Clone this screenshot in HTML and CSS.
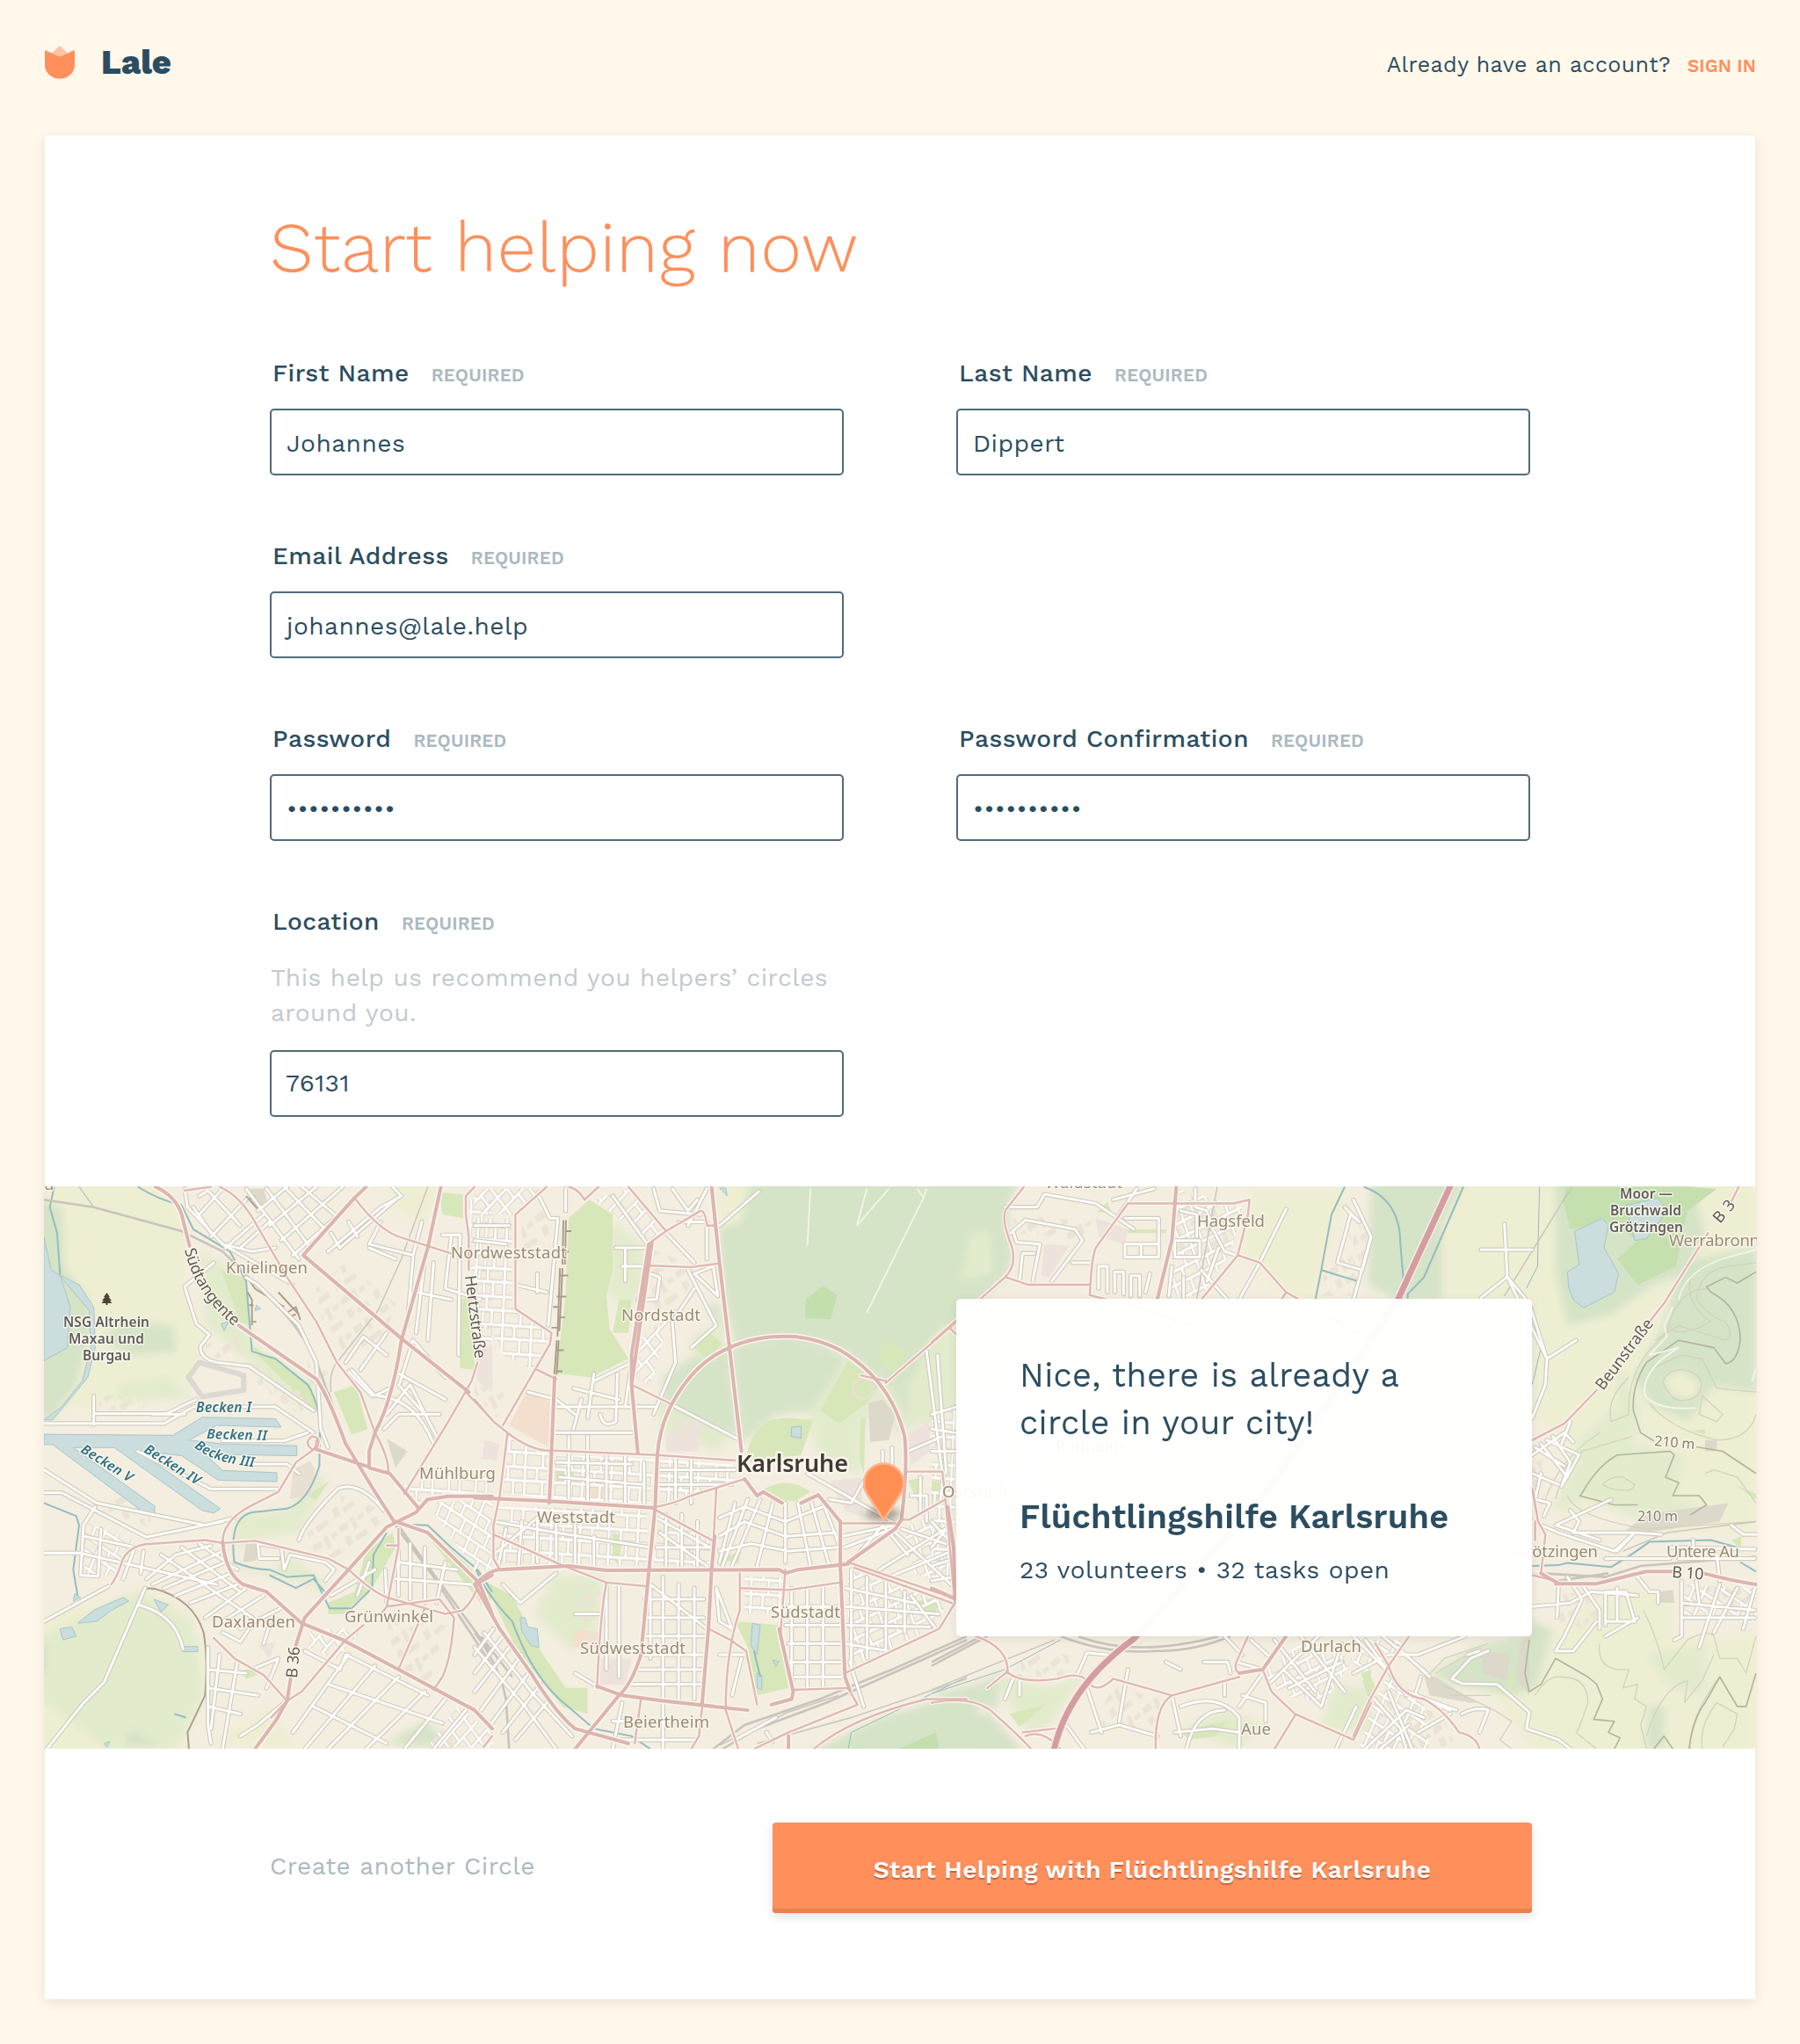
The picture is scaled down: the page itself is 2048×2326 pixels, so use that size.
FILE: index.html
```html
<!DOCTYPE html>
<html lang="en">
<head>
<meta charset="utf-8">
<title>Lale – Start helping now</title>
<link rel="stylesheet" href="styles.css">
</head>
<body>
<header class="topbar">
  <a class="brand">
    <svg class="brand-mark" viewBox="0 0 34 38" width="34" height="38">
      <path d="M0 5 17 12.500 34 5V22A17 15.500 0 0 1 0 22Z" fill="#ff8f5b"/>
      <path d="M17 0 26 8.500 17 12.500 8 8.500Z" fill="#ffc3a3"/>
    </svg>
    <span class="brand-name">Lale</span>
  </a>
  <div class="account"><span class="account-text">Already have an account?</span><a class="signin">SIGN IN</a></div>
</header>

<main class="card">
  <section class="form">
    <h1 class="title">Start helping now</h1>
    <div class="fields">
      <div class="field"><div class="label">First Name<span class="req">REQUIRED</span></div><div class="input">Johannes</div></div>
      <div class="field"><div class="label">Last Name<span class="req">REQUIRED</span></div><div class="input">Dippert</div></div>
      <div class="field wide"><div class="label">Email Address<span class="req">REQUIRED</span></div><div class="input">johannes@lale.help</div></div>
      <div class="field"><div class="label">Password<span class="req">REQUIRED</span></div><div class="input dots">••••••••••</div></div>
      <div class="field"><div class="label">Password Confirmation<span class="req">REQUIRED</span></div><div class="input dots">••••••••••</div></div>
      <div class="field"><div class="label">Location<span class="req">REQUIRED</span></div><p class="hint">This help us recommend you helpers’ circles around you.</p><div class="input zip">76131</div></div>
    </div>
  </section>

  <section class="map">
    <svg class="map-art" viewBox="50 1350 1949 640" width="1949" height="640">
      <defs>
        <pattern id="g0" width="92" height="76" patternUnits="userSpaceOnUse">
          <path class="pc" d="M0 14H92M0 50H92M18 0V76M56 14V50M74 50V90M74 -26V14"/><path class="pf" d="M0 14H92M0 50H92M18 0V76M56 14V50M74 50V90M74 -26V14"/>
        </pattern>
        <pattern id="g1" href="#g0" patternTransform="rotate(-42)"/>
        <pattern id="g2" href="#g0" patternTransform="rotate(28)"/>
        <pattern id="g3" href="#g0" patternTransform="rotate(3)"/>
        <pattern id="g4" href="#g0" patternTransform="rotate(-22)"/>
        <pattern id="bl" width="40" height="34" patternUnits="userSpaceOnUse" patternTransform="rotate(-30) scale(2.600)">
          <path d="M3 4h12v7H3zM20 3h6v14h-6zM30 6h8v5h-8zM4 18h8v10H4zM17 23h17v6H17z" fill="#ebe4d6"/>
        </pattern>

        <g id="minor">
          <g transform="translate(40 1340) scale(.33333 .42092)">
            <path d="M30 665H440L540 620H820L950 690M200 590V668M205 638H450L550 600M640 712H850L930 690M740 775H860L900 800M30 790 210 880 580 940 680 920M350 740 600 842H830M30 852H90L380 972 640 930M400 640H510M205 890 165 940 155 1075 215 1078 225 950M30 1015H150L620 1100M170 970 340 1000 300 1085M30 1200 250 1105M375 1110 235 1365 160 1425 40 1545M350 1155Q480 1180 505 1275"/>
            <path d="M610 230 510 295 550 395 595 425 565 455Q560 490 620 500L730 510 950 630M640 180 880 290M720 270 760 290 900 400 960 500 975 680 1000 730M900 980Q920 930 1035 840 1110 820 1190 900M1080 520 1160 590 1210 570M1140 190 1230 220M1320 120 1290 210 1140 180 1180 120M1420 160 1400 300 1520 330M1390 155H1450L1445 480"/>
            <path d="M510 30 520 80 640 180 740 200 820 190M560 50 590 35 700 130M560 100 640 30M540 80 600 150M600 160 720 60M650 190 780 100M700 190 800 120M720 30 900 220M790 30 940 190M850 25 990 140M910 25 1030 105M760 90 860 25M800 130 960 25M840 170 1050 25M880 210 1080 70M1000 200 1180 80 1250 50 1220 25M1040 190 1230 60M1010 150 1040 190M1070 120 1100 160M1290 215 1270 400M1330 220 1300 420M1360 230 1340 440M1300 310 1420 330"/>
            <path d="M1170 590Q1300 600 1360 720M1190 680 1240 640 1380 640M1200 640 1280 560 1370 700M1240 560 1330 640M1245 555 1290 440 1400 540M1240 530 1400 600M1060 500 1120 430 1200 480M1110 520 1200 420M1070 525 1150 590M990 1090 1020 1060 990 1040 870 1020 850 1060 840 1000 760 990 765 1030 830 1030M1140 1040 1100 1130M1010 1130 1160 1060M1240 980V1130M1200 1150 1195 1060M1280 990V1140M1330 1000V1150M1400 1040 1370 1150M1240 1040 1440 1060M1230 1085 1490 1100"/>
            <path d="M590 1270V1480L600 1530M630 1290 600 1490M690 1310 640 1545M590 1330 720 1340M590 1380 760 1400M590 1430 700 1450M740 1330 830 1300 790 1380M700 1510 760 1480 850 1420M920 1280 1040 1330 1060 1290M1070 1290 880 1500M1160 1320 920 1545M1240 1350 1000 1545M1330 1390 1130 1545M1060 1290 1340 1400M1000 1370 1390 1475M950 1430 1200 1530M1400 1410 1260 1545M1470 1440 1360 1545"/>
            <path d="M380 1085 480 1020 600 995M400 1100 640 1010M440 1110 650 1040M480 1130 670 1070M530 1150 690 1100M580 1190 720 1110M640 1200 780 1130M700 1220 850 1160M430 1020 760 1200M500 1000 700 1120M360 1070 370 1010M560 990 690 1060M640 1230 700 1255 730 1220M780 1260 800 1210"/>
          </g>
          <g transform="translate(540 1340) scale(.35714 .42092)">
            <path d="M0 130H110M0 170 100 180M130 290 230 310M200 260V310M265 110 235 400M205 50 240 110H265M290 30V90M450 190H540M470 240H550M480 190V280M560 260 590 270 580 330 520 330M440 50 550 180M610 150 700 230M630 30 680 90 710 60M570 30 590 90 720 100M680 250 770 400 690 460M700 260 760 240 775 320 700 260M780 130 905 38M570 640 640 500 630 390 700 300M740 30 680 130M650 120H740V220"/>
            <path d="M170 580 260 600 320 640M315 570 460 600M360 650 380 530M315 680 340 600M400 640Q410 680 450 660L455 530M260 690H500M250 620H580M480 620 500 500 380 550M260 770 500 775M270 810 540 830M580 790H830M580 830H820M300 700V880M360 700V880M420 750V880M480 750V880M540 770V880M640 760V880M690 760V880"/>
            <path d="M630 615 835 705M1060 800 1340 935M1130 870 1200 880 1240 820M1300 740V800M1330 730V850M1420 810V900M1440 470 1490 800M1380 740 1490 700M1390 860 1440 860 1440 930"/>
            <path d="M830 880 780 1040M870 870 790 1050M910 870 820 1050M950 880 900 1050M990 880V1040M1030 880 1070 1050M1070 870 1130 1050M1110 880 1160 990M780 920 860 890 990 930 1110 890M780 970 860 930 990 970 1150 960M780 1010 880 990 1000 1010 1155 1000M1170 970 1340 940M1180 1000 1330 950M1200 1040 1300 940 1380 1020M1360 950 1500 990M1340 960 1530 1110M1290 1060 1500 950M1320 1080 1520 1010"/>
            <path d="M60 930 260 960 560 1000M100 950 75 1050M150 930 140 1050M200 920V1040M260 930V1050M320 940V1050M380 970V1060M60 1020 200 920M580 920 750 1000M590 960 740 1050M610 910V1050M660 910V1050M710 930V1050M580 1000H750M90 1100 145 1150 260 1070M320 1180H400M420 1100V1330M460 1100V1350M320 1340 400 1380"/>
            <path d="M560 1100V1300M600 1080V1420M650 1100V1410M700 1110V1410M540 1140H730M540 1190H730M540 1240H740M530 1290H730M520 1330H730M500 1370H720M560 1100 740 1220M770 1110 820 1220 780 1200 770 1110M780 1290H860M850 1300 820 1400M1010 1110V1380M1060 1110V1380M1110 1110V1380M990 1160H1170M990 1210H1170M1000 1260H1170M1000 1310H1170M1020 1350H1170M1200 1060V1330M1250 1080V1300M1310 1090V1280M1370 1120V1230M1180 1110 1400 1150M1180 1160 1480 1180M1180 1210 1450 1215M1180 1260 1320 1280M1390 1130 1470 1220M470 1420 440 1545M600 1420V1545M440 1470H700M470 1520H700"/>
            <path d="M0 1290 60 1220M0 1340 90 1240M0 1390 120 1260M20 1440 150 1290M50 1480 180 1330M90 1500 210 1370M130 1520 230 1420M30 1230 190 1400 310 1510M0 1270 160 1430 260 1545M1195 1310 1240 1430M830 1520 960 1460M930 1500 950 1525"/>
          </g>
          <g transform="translate(1060 1340) scale(.33333 .42092)">
            <path d="M250 80H360L385 45 560 70 690 140M270 150 320 115 490 140 515 170 410 280M280 150 290 175 370 180 345 280M300 280 310 205H350M660 110H775V215H660V180H770M715 180V215M480 230H540M570 300V240H600V310M625 310V255H655V315M680 320V265H710V320M730 310 745 260M830 170H915V215H830ZM850 90 905 100V160M900 30V80L940 90 960 140 1000 200 1040 210M980 190 940 280M1210 85 1120 230 1050 330M1410 80 1460 120 1430 100 1385 230 1470 250 1500 160M820 240 810 320M860 270V325M920 250 1010 330M640 100 700 30M760 30 620 60"/>
            <path d="M0 640 85 620M0 680 80 690M20 480 50 800M0 740H80M40 800 30 870M0 930 70 990M0 1000 60 940M0 1050 80 1030M0 1090 75 1080"/>
            <path d="M250 1410 280 1350M300 1350V1400M500 1340 530 1285 600 1290M640 1470 670 1330M800 1310 850 1330M930 1310H1010L1020 1340M1000 1240 1060 1290M1090 1250 1160 1300M1040 1310 1130 1330M820 1400 850 1510M850 1430Q980 1390 1050 1460V1545M870 1545Q900 1440 1000 1440M830 1500 960 1490 1050 1500M1050 1430 1130 1340M460 1480 520 1545M530 1380 580 1500M545 1500 640 1480 770 1510M1000 1370V1400M1150 1370 1320 1240M1170 1250 1310 1390M1200 1330 1330 1430 1400 1260M1260 1240 1410 1390M1220 1380 1400 1310M1380 1545 1450 1430M1060 1400 1140 1420V1470"/>
          </g>
          <g transform="translate(1540 1340) scale(.33333 .42092)">
            <path d="M0 60 60 160 0 330M515 125 525 268 660 490 760 440M435 195H610M435 325 525 268 600 340 660 490 655 560 610 650M610 750 720 690 750 715M620 730 720 780M640 720 730 810M660 710 770 750 710 835 740 770 680 700M740 660 710 720M610 800 700 830M640 800 620 870 670 880 650 915M690 940 840 980M690 940 880 870M740 900 770 930 750 960 960 960 900 1010M610 930 700 960 890 1010 960 960 1050 965"/>
            <path d="M610 1160 740 1150 810 1120 970 1130M700 1100 695 1190M730 1080 780 1140 720 1240 690 1280H750L830 1200M780 1100 840 1170V1220M860 1210V1120H930L960 1200H865M970 1190 860 1240M900 1110V1200M970 1080 1010 1120H1040V1150M1120 1090V1240L1095 1250M1120 1150 1370 1170M1120 1190 1370 1190M1170 1090 1180 1150M1250 1100 1180 1270M1310 1110 1230 1230M1370 1110 1330 1220M1240 1020 1250 1090M1110 1030H1370M1080 1000 1370 1005M1160 980V1020M860 1030 1080 1030M1290 940 1330 965H1374"/>
            <path d="M335 1355 400 1300 460 1280M335 1355 370 1368 490 1370 600 1445 590 1490 700 1520 740 1545M390 1290 430 1280M0 1240 110 1330M40 1250 180 1400M100 1240 250 1340M0 1340 120 1290 220 1290M220 1290 380 1240M150 1270 260 1350M60 1400 160 1490 180 1545M120 1390 200 1545M150 1380 350 1440M40 1545 180 1440 240 1460M90 1545 190 1480M220 1500 330 1450M370 1450Q420 1430 460 1440L430 1500M230 1350 210 1400 330 1440"/>
          </g>
        </g>

        <g id="secondary">
          <g transform="translate(40 1340) scale(.33333 .42092)">
            <path d="M510 35 600 25M630 25Q700 50 750 120L860 270 960 390 1030 500 1110 580 1160 690Q1210 760 1205 800M1090 55Q1180 150 1260 165L1420 205M1500 25 1470 50V100L1480 160V250M1510 500 1490 550 1410 660 1260 855M1470 580 1560 655M960 735Q980 700 945 700 915 715 945 735 960 735 960 710M640 985Q640 930 730 890L830 850 890 770 960 730M260 1100Q280 1080 300 1030 330 990 400 990L580 980 640 988 750 982 1000 1030 1070 1060Q1150 1120 1200 1135L1400 1180 1460 1170Q1500 1140 1515 1095M1240 950V1000L1200 1160 1180 1180M1200 995H1240M610 1245 680 1300 780 1345 860 1415 805 1460M860 1415 910 1390 1060 1250 1120 1210M1200 1160 1380 1140 1430 1190Q1420 1300 1390 1350L1360 1385M1330 1165 1240 1330M1530 1540 1560 1510"/>
          </g>
          <g transform="translate(540 1340) scale(.35714 .42092)">
            <path d="M230 25 130 100V355L245 420 240 450 90 670M200 520 260 545M300 25Q330 30 350 60L395 25M490 25 610 145M560 175 610 145 720 90Q735 90 740 130H765M560 238 690 242 780 232M500 560 620 610M0 600 60 660 105 690 80 860 60 940V1030L80 1060M105 690Q180 740 245 738L580 750 830 765M582 890Q640 880 690 860L860 815M580 900 755 980M770 840 760 1000M60 965 270 1045 420 1095 550 1105M420 1095Q400 1180 390 1380M845 1070V1170Q800 1280 800 1440L840 1545M850 1110 1000 1115 1165 1095M990 1060 975 1230M745 1220 815 1250 865 1280 900 1425M1015 1385 1190 1380 1220 1425 1000 1500 890 1545M1180 1340 1480 1220 1530 1150 1500 870 1490 795H1380M1360 925H1385L1500 870M1190 1040 1520 1135M1210 1055 1520 1150M1230 535 1310 550M1310 555 1535 390M530 1410 510 1530M725 1430 715 1510 690 1545"/>
            <path d="M1165 935H1340M1080 1545Q1200 1460 1440 1410L1568 1410"/>
          </g>
          <g transform="translate(1060 1340) scale(.33333 .42092)">
            <path d="M0 445 250 270Q290 240 275 190 230 100 260 80L315 25M255 270 330 290H540M670 70H1030L1085 60 1080 100 1045 210M670 70 560 190Q545 220 540 318L700 350 900 400M1045 210 920 330 800 410M1045 210 1120 230 1210 310 1500 440M1210 310 1190 335M60 405 85 425M150 1240Q260 1270 260 1335L190 1380M255 1335Q300 1370 430 1355 500 1335 530 1360 560 1400 620 1355L820 1400 1050 1350M820 1400Q760 1430 765 1545M1080 1240 1040 1310Q1030 1340 1060 1340M1130 1330 1160 1390 1240 1450 1440 1520M1240 1455 1170 1545M1440 1520 1500 1420M0 1420Q130 1400 200 1440 300 1510 340 1545M310 1500 420 1490M320 1510Q380 1490 440 1545"/>
          </g>
          <g transform="translate(1540 1340) scale(.33333 .42092)">
            <path d="M610 710 720 665 830 575M1010 390 1060 340 1210 150M1280 80 1315 25M610 840 630 930 655 965 640 1070M620 930V980M610 1075 690 1090M0 1510 50 1420 120 1320 190 1240M75 1260 120 1320Q150 1400 240 1410 310 1440 360 1500 420 1510 430 1545"/>
          </g>
        </g>

        <g id="primary">
          <g transform="translate(40 1340) scale(.33333 .42092)">
            <path d="M410 25Q480 50 500 100L527 185M695 400 960 545Q1000 590 1060 720L1160 850 1225 930M1385 25 1340 190 1250 440Q1220 600 1160 690L1140 740V785L1210 800 1310 895M915 210 1250 435 1480 580M915 210 1090 55 1130 25M960 735 1130 780M1560 862H1410L1340 870 1300 905 1200 945 1070 1060 920 1190 890 1265M873 1350 860 1415 820 1470 750 1545M640 985Q650 1070 710 1100L790 1120 910 1205 1050 1250 1240 1330 1500 1440 1560 1490M1230 930 1340 960 1515 1095 1560 1075M1515 1095 1560 1180"/>
          </g>
          <g transform="translate(540 1340) scale(.35714 .42092)">
            <path d="M755 25 780 230 812 460 850 740M565 175 525 410 500 560 520 745M555 180 500 480V560M255 540 245 740 238 880M0 866 240 875 575 893 582 750Q590 670 630 610 700 500 812 460 900 425 1020 430 1120 440 1190 480 1330 560 1370 700 1380 780 1360 925L1340 950 1190 1040M575 893 555 1065 530 1290Q500 1370 460 1400L320 1545M0 1100Q50 1060 80 1060L300 1050 420 1062 970 1060 990 1070 1030 1060 1190 1045M765 970 755 1060 745 1220 725 1420M860 815 900 860 920 850 980 880M1040 880 1095 858 1165 930 1165 1045 1180 1350 1195 1385M390 1375 470 1400 600 1415 870 1440M970 1220 1015 1390 1010 1410 945 1425M0 1100 80 1220 180 1340Q260 1450 320 1490L490 1530M1000 1510V1545"/>
          </g>
          <g transform="translate(1060 1340) scale(.33333 .42092)">
            <path d="M835 25 820 170 770 330M0 1110 75 1137M55 890 75 1000 80 1140M1050 1340 1130 1330 1210 1240"/>
          </g>
          <g transform="translate(1540 1340) scale(.33333 .42092)">
            <path d="M690 1098H830Q920 1080 1000 1065L1090 1065M1195 1070Q1290 1090 1374 1100M640 1070 700 1098"/>
          </g>
        </g>
      </defs>

      <rect x="50" y="1350" width="1949" height="640" fill="#f4eee0"/>

      <!-- farmland and woodland -->
      <g class="soft">
        <g transform="translate(40 1340) scale(.33333 .42092)">
          <path class="farm" d="M0 0H430L500 90 530 190 510 300 590 430 540 560 360 610 0 640ZM0 1190 370 1110 520 1170 580 1290 590 1400 500 1560H0ZM1190 0H1380L1330 140 1240 90ZM590 1530 800 1430 900 1545Z"/>
          <path class="mead" d="M0 1250 350 1120 540 1200 570 1400 480 1545H250L30 1420ZM560 200 700 260 740 450 960 560 900 620 700 480 580 400ZM280 560 450 540 540 600H290Z"/>
          <path class="wood" d="M0 60 90 80 100 240 180 330 190 420 140 560 60 650H0ZM290 390 470 400 480 470 330 480 230 440ZM0 1270 40 1260 40 1340H0ZM1200 1530 1330 1470 1440 1545ZM300 1530 330 1490 430 1545Z"/>
          <path class="mead" d="M680 910 860 900 960 800 1000 820 900 960 760 975 680 1010 690 1050 800 1070 860 1020 970 1080 1000 1150 940 1100 680 1060Z"/>
        </g>
        <g transform="translate(540 1340) scale(.35714 .42092)">
          <path class="farm" d="M780 0H930L880 140H780Z"/>
          <path class="wood" d="M880 0H1700V260L1540 400 1480 650 1380 680 1330 570 1180 470 1000 430 830 450 790 300 780 140 850 120ZM600 540 720 470 815 460 835 700 600 620ZM820 460 1000 430 1180 480 1100 630 960 640 850 720ZM770 330 800 420 740 360ZM1050 1560 1300 1460 1600 1380V1560Z"/>
          <path class="mead" d="M440 120 540 180 540 300 490 350 420 320ZM1060 640 1190 480 1330 570 1370 700 1240 650 1230 800 1100 780ZM250 1080 410 1070 390 1220 310 1280 190 1180ZM700 420 790 400 800 470 730 500 690 460ZM580 620 820 690 780 740 600 700ZM1380 560 1480 400 1560 400 1540 620 1380 680Z"/>
        </g>
        <g transform="translate(1060 1340) scale(.33333 .42092)">
          <path class="farm" d="M1090 30H1420L1310 330H1210L1060 200Z"/>
          <path class="wood" d="M0 0H300L250 100 280 220 200 310 60 390 0 390ZM0 1450 200 1450 320 1560H0ZM0 1400 150 1370 240 1340 220 1440Z"/>
          <path class="mead" d="M130 150 200 140 210 260 100 280ZM200 1340 400 1380 520 1340 400 1490 330 1500ZM850 1490 1000 1440 1140 1480 1040 1545ZM1370 1370 1500 1380 1500 1500 1330 1490Z"/>
        </g>
        <g transform="translate(1540 1340) scale(.33333 .42092)">
          <path class="farm" d="M180 0H1374V960L1000 960 900 870 700 920 760 740 610 640V330H200ZM780 1160 980 1100 1090 1140 1100 1250 1374 1230V1560H620L480 1400 600 1290Z"/>
          <path class="wood" d="M60 0H380L300 130V330H150L50 290ZM690 0H1150L1200 160 1140 250 1000 300 880 370 730 400 690 250ZM1120 230 1374 190V580L1230 560 1140 660 1010 610 960 540 1060 400ZM600 1200 680 1220 620 1380 540 1400 330 1370 270 1340 420 1270 590 1240ZM1010 1430H1060V1545H1000Z"/>
          <path class="mead" d="M900 500 980 620 920 800 680 910 780 700 900 620ZM950 720 1130 750 1100 860 1200 900 980 930 780 860ZM1000 1290 1200 1260 1200 1400 1080 1380Z"/>
          <path class="farm" d="M1060 540 1120 520 1190 560 1160 600 1080 590Z"/>
        </g>
      </g>

      <!-- parks, built-up tints -->
      <g transform="translate(40 1340) scale(.33333 .42092)">
        <path class="park" d="M635 250 715 270 735 400 700 390ZM740 455 940 560 970 640 940 620 760 480ZM1020 580 1095 560 1135 680 1080 695ZM1380 40 1460 45V110L1390 100ZM1450 330 1490 320 1500 520 1450 515ZM930 860 1005 820 960 870ZM1000 1150 1090 1120 1130 1010 1220 960 1230 1000 1150 1110 1050 1180 1000 1180ZM1340 950 1480 1050 1560 1130 1540 1170 1340 970ZM700 1335 740 1325 760 1345 720 1355Z"/>
        <path class="clay" d="M1510 480 1560 450V580L1510 550ZM1350 1530 1390 1490 1430 1520 1400 1545 1360 1545ZM760 1265 820 1255 800 1300Z"/>
        <path class="gray" d="M720 990H765L755 1035 710 1040ZM1200 705 1270 740 1230 785ZM725 30H780L790 60 760 85 730 60Z"/>
        <path d="M523 540 560 500 712 535 712 575 570 592Z" fill="#f4eee0" stroke="#dcd8d2" stroke-width="6" stroke-linejoin="round"/>
        <path fill="url(#bl)" d="M580 450 700 430 720 480 600 490ZM740 490 940 600 900 640 760 560ZM960 300 1060 230 1230 340 1190 440 1060 480 980 390ZM920 970 1050 860 1160 890 1190 930 1020 1050 910 1000ZM240 850 360 870 410 950 230 910ZM1200 1190 1400 1210 1340 1380 1220 1320ZM220 590 380 590 370 630 220 630ZM930 480 1000 530 980 620 930 540Z"/>
        <path fill="#e8e1d3" d="M880 790 940 765 955 790 940 860 870 870Z"/>
      </g>
      <g transform="translate(540 1340) scale(.35714 .42092)">
        <path class="park" d="M365 60 440 100 440 250 420 320 430 410 490 490 370 540 260 530 290 320 300 110ZM460 330H500L490 420 440 420ZM1100 630 1190 495 1290 560 1250 610 1160 665ZM1280 480 1320 435 1380 480 1330 530ZM870 740Q890 650 1000 650L1080 655 1040 750 870 770ZM910 850Q990 800 1070 850L1020 875 950 870ZM700 460 750 420 790 450 740 490ZM830 1200 970 1210 1000 1380 900 1400 870 1270ZM30 1090 120 1130 210 1280 290 1380 360 1380 360 1450 280 1430 130 1270ZM260 780 320 790 310 835 260 830ZM780 1030 850 1010 840 1045ZM1380 820 1430 810 1420 890ZM1230 650 1245 650 1240 800 1225 760ZM1390 1150 1500 1130 1450 1200ZM440 960 470 970 460 1050 440 1030Z"/>
        <path d="M1055 330 1110 292 1155 318 1135 383 1053 380ZM1350 1545 1470 1500 1480 1545Z" fill="#c3dfad"/>
        <path class="clay" d="M0 500 40 450 60 560 10 550ZM30 710 80 720 70 765 25 760ZM400 1300 500 1300 480 1370 395 1370ZM610 700 720 650 710 740 610 740ZM1380 690 1450 660 1450 740 1390 780ZM1130 820 1230 810 1240 920 1180 900Z"/>
        <path d="M165 580 240 605V730L110 670ZM365 825 410 825V865H370ZM315 1225 395 1225 390 1270H315Z" fill="#f4dfcf"/>
        <path class="gray" d="M1255 610 1300 600 1340 640 1320 710 1260 715Z"/>
        <ellipse cx="1237" cy="570" rx="32" ry="28" fill="none" stroke="#e8dfcc" stroke-width="9"/>
        <path fill="url(#bl)" d="M620 640 780 670 760 720 620 720ZM150 100 230 60 240 200 150 190ZM560 190 700 240 650 400 570 430ZM0 540 100 580 70 650 0 580ZM340 1100 400 1110 380 1280 320 1260Z"/>
        <path class="ride" d="M1070 30 1060 185M1250 30 1218 130 1320 30M1410 30 1430 55 1250 365M1440 30 1430 55"/>
      </g>
      <g transform="translate(1060 1340) scale(.33333 .42092)">
        <path class="park" d="M565 95 600 65 610 90ZM670 140H800V150H670ZM265 1450 390 1425 300 1485ZM850 1500 940 1480 1010 1470 970 1510 880 1520ZM1465 1340 1500 1330 1500 1400ZM0 820 30 820 30 870 0 880Z"/>
        <path class="clay" d="M560 110 670 140 660 180 570 160ZM385 180 470 185 400 270 375 265Z"/>
        <path fill="url(#bl)" d="M270 100 560 120 500 170 300 150ZM830 60 1060 90 1020 200 840 210ZM1340 260 1430 150 1450 320H1330ZM300 1290 480 1290 460 1350 310 1350ZM620 1370 820 1420 740 1490 560 1480Z"/>
      </g>
      <g transform="translate(1540 1340) scale(.33333 .42092)">
        <path d="M715 60 725 25H1130L1240 30 1140 90 1100 240 970 290 900 220 970 170 870 120 740 140Z" fill="#c5dfae"/>
        <path class="park" d="M30 1360 60 1350 75 1380 50 1405ZM530 1340 550 1330 545 1395 520 1390ZM1300 830 1374 855V870ZM1155 685 1200 680V695ZM1290 980 1325 970 1320 1005Z"/>
        <path class="gray" d="M920 960 1000 910 1280 880 1250 930 1000 960ZM240 1345 280 1350 420 1420 400 1420 260 1400ZM570 1260 600 1240 600 1400 555 1350ZM1200 710 1240 710V740H1200ZM1040 1120 1090 1115 1095 1150H1040ZM440 1280 535 1290 520 1360 440 1340Z"/>
        <path fill="url(#bl)" d="M0 120 50 150 20 280 0 290ZM600 720 640 720 650 900 610 830ZM700 1120 850 1130 820 1230 700 1200ZM1130 1100 1370 1120 1300 1200ZM80 1400 300 1450 350 1545H60Z"/>
      </g>

      <!-- water -->
      <g transform="translate(40 1340) scale(.33333 .42092)">
        <path class="water" d="M30 160 55 250 85 265 120 350 110 460 30 495ZM80 262 150 290 200 350 205 460 180 540 60 655H30L90 620 160 550 190 460 185 360 110 290ZM30 694 470 697 570 648 820 652 840 675 620 670 525 710 640 720 893 725V752L580 748 640 792 825 798V822L625 818 500 752 350 738 632 895 610 907 570 900 270 730 130 730 408 888V914L370 905 60 722H30ZM85 1220 125 1215 140 1240 95 1250ZM145 1205 200 1170 300 1135 320 1145 260 1170 210 1200ZM405 1140 455 1155 430 1175ZM510 1268H555V1282H505ZM635 395 660 390 645 415ZM755 345 770 355 750 360ZM135 1125 155 1135 130 1145ZM235 1530 255 1525 245 1540Z"/>
        <path class="stream" d="M65 25 50 80 75 150 85 262M350 25Q420 60 500 75L540 140 665 200 720 280 740 470 820 490 930 560Q970 610 972 680L970 780Q930 880 860 895L740 905Q660 920 680 1040 740 1060 800 1060L860 1080 950 1075 1005 1165 1080 1165 1150 1110 1155 1020 1200 960M1260 938 1340 940 1420 1000 1510 1060 1560 1120M30 880 140 915 150 940 130 1060 145 1130M475 1450 515 1460M800 1075 890 1110 950 1085 1000 1130"/>
      </g>
      <g transform="translate(540 1340) scale(.35714 .42092)">
        <path class="water" d="M780 28 800 28 805 50ZM1010 675 1040 672 1040 705 1008 700ZM885 1205 910 1210 900 1290 880 1265ZM900 1340 915 1345 915 1385 900 1380ZM145 1190 160 1190 170 1215 200 1220 205 1270 180 1265 150 1225ZM950 1305 970 1308 960 1322Z"/>
        <path class="stream" d="M0 1050Q30 1120 120 1200 180 1340 270 1410L380 1490 500 1510 560 1545M890 1280 910 1350"/>
        <path class="stream thin" d="M1190 1545 1200 1500 1568 1350"/>
      </g>
      <g transform="translate(1060 1340) scale(.33333 .42092)"><path class="stream" d="M1410 25 1365 100 1330 250 1310 330M1330 250 1390 265 1455 280"/><path class="stream thin" d="M0 1395 250 1330 440 1250"/></g>
      <g transform="translate(1540 1340) scale(.33333 .42092)">
        <path class="water" d="M755 145 850 110 870 130 855 190 905 260 890 310 785 352 750 330 735 300 730 255 770 235ZM930 75 1040 55 1070 90 1000 165 960 170Z"/>
        <path class="stream" d="M35 25Q160 60 160 180L172 290M375 25 240 270 185 315V330M610 1050 700 1048 730 1042 880 1053Q950 1020 1010 985L1220 980 1310 1000M1320 1040 1374 1065"/>
        <path class="stream thin" d="M635 25 628 240 590 300M640 460 610 560"/>
      </g>

      <!-- street texture -->
      <g transform="translate(40 1340) scale(.33333 .42092)">
        <path fill="url(#g3)" d="M1480 60H1560V440L1510 500 1490 250ZM1220 830 1560 790V850L1400 855 1310 890Z"/>
        <path fill="url(#g2)" d="M1340 880 1560 870V1060L1500 1060ZM165 930 330 980 310 1020 280 1080 170 1070Z"/>
        <path fill="url(#g1)" d="M940 1220 1120 1220 1030 1300 930 1270ZM1440 1430 1560 1500V1540H1340Z"/>
      </g>
      <g transform="translate(540 1340) scale(.35714 .42092)">
        <path fill="url(#g1)" d="M0 30H220L130 100 0 100ZM380 60 490 30 600 140 560 170Z"/>
        <path fill="url(#g3)" d="M0 110 120 110 120 340 240 430 190 520 90 480 60 420 0 400ZM110 700 240 750 230 870 90 850ZM260 750 570 760 560 880 250 870ZM590 760 820 775 830 830 640 870 590 880ZM70 890 550 900 550 1050 80 1040ZM590 910 750 980 750 1050H570ZM860 1080 990 1080 980 1180 860 1180Z"/>
        <path fill="url(#g4)" d="M1190 1060 1500 1150 1480 1210 1190 1330ZM1370 950 1490 900 1515 1100 1400 1070Z"/>
        <path fill="url(#g1)" d="M520 440 620 380 560 560 510 540Z"/>
      </g>
      <g transform="translate(1060 1340) scale(.33333 .42092)">
        <path fill="url(#g4)" d="M840 30 1060 80 1020 200 920 320H810ZM1130 1340 1260 1260 1440 1300 1340 1420 1200 1400Z"/>
        <path fill="url(#g3)" d="M0 640 80 620 80 1100 0 1080ZM100 560 400 480 420 900 120 950Z"/>
      </g>
      <g transform="translate(1540 1340) scale(.33333 .42092)">
        <path fill="url(#g2)" d="M0 1250 180 1250 120 1320 0 1340ZM60 1440 120 1340 240 1420 260 1545H20ZM1130 1100 1374 1110V1200L1130 1190Z"/>
      </g>

      <!-- contours -->
      <g class="contour">
        <g transform="translate(1540 1340) scale(.33333 .42092)">
          <path d="M1374 230 1280 240Q1180 250 1170 330 1220 380 1270 390 1300 430 1270 440L1110 400 1030 440M1210 300Q1100 300 1070 420 930 510 940 640L880 660Q860 600 940 540M1150 270Q1130 340 1220 390 1100 440 1080 400M1374 580 1240 570 1190 490 1120 480 1010 520M1010 610Q1080 680 1240 710 1350 710 1374 640M1055 550Q1080 515 1130 520 1190 530 1187 565 1180 605 1110 603 1070 590 1055 550M1190 590 1260 640 1240 660 1180 640ZM850 830Q880 805 920 810L960 830Q950 850 920 845 880 845 850 830M690 870Q700 820 780 740L950 700M730 860Q760 920 1000 950L1374 930M650 880Q700 760 840 690M1200 800 1230 790 1310 810 1374 880M620 1400Q660 1345 710 1350 800 1350 800 1420 770 1490 760 1500L830 1545M840 1260Q830 1320 900 1330H940L920 1380 970 1370 960 1410 1000 1430 980 1480 1000 1545M990 1170Q1040 1250 1060 1330L1140 1250Q1210 1220 1230 1240L1250 1300 1310 1300 1340 1340 1374 1240M1000 1510Q1050 1380 1140 1360L1130 1420 1190 1360 1230 1290M1150 1545Q1140 1480 1230 1370L1250 1350M1190 1545Q1180 1480 1240 1420L1310 1450 1300 1490 1260 1540M250 1350 310 1300 460 1260M280 1340 390 1290M300 1370 480 1440 540 1470 500 1520 540 1545M330 1400 470 1400"/>
          <path class="deep" d="M1374 255 1310 285 1270 270 1205 295 1220 310Q1320 350 1320 440 1310 500 1270 503L1230 460 1110 440 1000 500Q950 560 955 630L980 690 1025 712M1170 728 1260 740 1374 800M775 860Q830 780 900 750L1080 740 1095 750 1065 810 1110 825 1090 860 1180 860 1205 885 1150 912M970 885H890L770 860M600 1250 585 1340 600 1390 640 1370 690 1300 800 1350 830 1370 850 1410 820 1465 890 1470 870 1500 910 1515 890 1545M1145 1545Q1160 1460 1200 1420L1250 1350 1310 1430 1340 1430 1374 1340M1025 1545 1060 1510 1090 1545"/>
          <path class="ride" d="M1374 195 1280 215Q1130 250 1110 330M1090 350 1060 400 1070 430 1010 480 1110 460Q980 520 995 590 1040 630 1165 623M1374 515 1360 550"/>
        </g>
      </g>

      <!-- railways -->
      <g class="rail">
        <g transform="translate(40 1340) scale(.33333 .42092)"><path d="M30 60 200 80 500 145 640 200 830 350Q930 430 980 540L1040 680 1210 920 1360 1080 1560 1320M1000 580 1070 740 1230 940M1230 930 1560 1290"/><path class="thinrail" d="M150 25 200 80M1340 25 1250 220 1170 360 1040 490Q1000 520 1010 580"/></g>
        <g transform="translate(540 1340) scale(.35714 .42092)"><path d="M0 1230Q80 1320 100 1410L110 1545M760 1545 860 1480 1100 1410 1330 1330 1568 1240M790 1545 900 1490 1120 1420 1568 1250M20 1240 120 1350"/><path class="thinrail" d="M900 1530 1200 1460 1568 1355M780 1535 1000 1445 1160 1400"/></g>
        <g transform="translate(1060 1340) scale(.33333 .42092)"><path d="M0 1310 170 1240M0 1320 190 1240M440 1240Q600 1290 770 1280 900 1280 1020 1240M500 1240Q700 1300 980 1240"/><path class="thinrail" d="M975 25 945 150 905 330M0 1385 200 1320 420 1250"/></g>
        <g transform="translate(1540 1340) scale(.33333 .42092)"><path d="M640 1070 860 1080 980 1050 1374 1025M610 1070 700 1090 870 1070"/><path class="thinrail" d="M745 25 640 160 515 320M920 1010 1070 960 1374 930"/></g>
      </g>
      <g class="siding">
        <g transform="translate(40 1340) scale(.33333 .42092)"><path d="M720 50 760 85M730 60 750 50M720 265 750 300 850 350M725 310 740 330V400M730 345H745M740 390H755M830 310 900 370M850 370 890 350 905 385M870 375 890 370M375 1110 410 1112Q540 1140 575 1230 590 1300 580 1400L520 1500 525 1545"/></g>
        <g transform="translate(540 1340) scale(.35714 .42092)"><path d="M283 115 280 235M291 115 288 235M272 245 264 430M280 245 270 415M262 440 254 535M268 440 261 535M288 145H308M280 200H300M272 265H298M262 322H292M250 350H270M265 378H288M245 406H265M260 467H284M262 524H280"/></g>
      </g>

      <!-- roads -->
      <use href="#minor" class="road minor-case"/>
      <use href="#minor" class="road minor-fill"/>
      <use href="#secondary" class="road sec-case"/>
      <use href="#primary" class="road pri-case"/>
      <use href="#secondary" class="road sec-fill"/>
      <use href="#primary" class="road pri-fill"/>
      <path class="road motor-case" d="M1650 1350 1590 1480 1440 1700 1290 1865Q1215 1920 1199 1992"/>
      <path class="road motor-fill" d="M1650 1350 1590 1480 1440 1700 1290 1865Q1215 1920 1199 1992"/>

      <!-- place names -->
      <g class="place">
        <text x="50" y="1354">u</text>
        <text x="257" y="1448.500" textLength="93">Knielingen</text>
        <text x="513" y="1432" textLength="132">Nordweststadt</text>
        <text x="477" y="1683" textLength="87">Mühlburg</text>
        <text x="241" y="1852" textLength="95">Daxlanden</text>
        <text x="392" y="1846" textLength="101">Grünwinkel</text>
        <text x="707" y="1503" textLength="90">Nordstadt</text>
        <text x="611" y="1733" textLength="89">Weststadt</text>
        <text x="877" y="1841" textLength="79">Südstadt</text>
        <text x="660" y="1882" textLength="120">Südweststadt</text>
        <text x="709" y="1966" textLength="98">Beiertheim</text>
        <text x="1072" y="1704" textLength="76">Oststadt</text>
        <text x="1201" y="1652" textLength="78">Rintheim</text>
        <text x="1189" y="1352" textLength="88">Waldstadt</text>
        <text x="1362" y="1396" textLength="77">Hagsfeld</text>
        <text x="1480" y="1879.500" textLength="69">Durlach</text>
        <text x="1412" y="1974" textLength="34">Aue</text>
        <text x="1899" y="1418" textLength="103">Werrabronn</text>
        <text x="1723" y="1772" textLength="95">Grötzingen</text>
        <text x="1896" y="1772" textLength="83">Untere Au</text>
      </g>
      <g class="reserve">
        <text x="72" y="1510" textLength="98">NSG Altrhein</text>
        <text x="78" y="1529" textLength="86">Maxau und</text>
        <text x="94" y="1548" textLength="55">Burgau</text>
        <text x="1843" y="1364" textLength="60">Moor —</text>
        <text x="1832" y="1383" textLength="81">Bruchwald</text>
        <text x="1831" y="1402" textLength="84">Grötzingen</text>
      </g>
      <g class="basin">
        <path id="b3" d="M221 1647Q246 1667 300 1670" fill="none"/>
        <text x="223" y="1607" textLength="63">Becken I</text>
        <text transform="translate(235 1637) rotate(1.500)" textLength="69">Becken II</text>
        <text><textPath href="#b3" textLength="73">Becken III</textPath></text>
        <text transform="translate(91 1652) rotate(32)" textLength="66">Becken V</text>
        <text transform="translate(163 1652) rotate(32)" textLength="72">Becken IV</text>
      </g>
      <g class="street">
        <path id="sued" d="M210 1422Q222 1475 272 1514" fill="none"/>
        <text><textPath href="#sued" textLength="106">Südtangente</textPath></text>
        <text transform="translate(529 1452) rotate(83)" textLength="95">Hertzstraße</text>
        <text transform="translate(338 1910) rotate(-85)" textLength="36">B 36</text>
        <text transform="translate(1824 1583) rotate(-53)" textLength="96">Beunstraße</text>
        <text transform="translate(1957 1393) rotate(-50)" textLength="28">B 3</text>
        <text transform="translate(1902 1795) rotate(4)" textLength="36">B 10</text>
      </g>
      <g class="height">
        <text transform="translate(1882 1645) rotate(5)" textLength="46">210 m</text>
        <text x="1863" y="1731" textLength="46">210 m</text>
      </g>
      <text class="city" x="838" y="1675" textLength="127">Karlsruhe</text>
      <path d="M121.500 1471 125 1476H123.500L127 1480H125L127.500 1483H122.500V1485H120.500V1483H115.500L118 1480H116L119.500 1476H118Z" fill="#4c4433"/>

      <!-- marker -->
      <ellipse class="pin-shadow" cx="1004" cy="1723" rx="20" ry="7"/>
      <path class="pin" d="M1005.500 1729.500 986.500 1700A22.500 22.500 0 1 1 1024.500 1700Z"/>
    </svg>
    <aside class="circle">
      <p class="circle-lead">Nice, there is already a circle in your city!</p>
      <h2 class="circle-name">Flüchtlingshilfe Karlsruhe</h2>
      <p class="circle-meta">23 volunteers • 32 tasks open</p>
    </aside>
  </section>

  <footer class="actions">
    <a class="alt">Create another Circle</a>
    <button class="cta">Start Helping with Flüchtlingshilfe Karlsruhe</button>
  </footer>
</main>
</body>
</html>
```
FILE: styles.css
```css
* { box-sizing: border-box; }

body {
  margin: 0;
  min-height: 2326px;
  background: #fff8eb;
  color: #2c4d60;
  font-family: "Work Sans", Inter, "Open Sans", sans-serif;
}

h1, h2, p { margin: 0; }

/* header */
.topbar {
  height: 154px;
  padding: 50px 50px 0 51px;
  display: flex;
  justify-content: space-between;
  align-items: flex-start;
}
.brand { display: flex; gap: 30px; }
.brand-mark { margin-top: 2px; }
.brand-name { font-size: 38px; line-height: 42px; font-weight: 800; }
.account { display: flex; align-items: baseline; gap: 19px; padding-top: 3px; line-height: 42px; }
.account-text { font-size: 25px; letter-spacing: .38px; }
.signin { font-size: 20.500px; font-weight: 600; color: #ff8f5b; letter-spacing: .1px; }

/* card */
.card {
  width: 1946px;
  height: 2121px;
  margin: 0 51px;
  background: #fff;
  border-radius: 4px;
  box-shadow: 0 3px 14px rgba(60, 40, 0, .11);
}
.form { height: 1196px; padding: 88px 253px 0 256px; }
.title {
  font-size: 80px;
  line-height: 80px;
  font-weight: 300;
  letter-spacing: .55px;
  color: #ff8f5b;
  white-space: nowrap;
}
.fields {
  margin-top: 86px;
  display: grid;
  grid-template-columns: 653px 653px;
  column-gap: 128px;
  row-gap: 75px;
}
.field.wide { grid-column: 1 / -1; width: 653px; }
.label {
  height: 32px;
  padding-left: 3px;
  font-size: 28px;
  line-height: 34px;
  font-weight: 500;
  letter-spacing: .48px;
  white-space: nowrap;
}
.req { margin-left: 25px; font-size: 20.500px; font-weight: 600; color: #acb9c1; letter-spacing: .2px; }
.input {
  height: 76px;
  margin-top: 25px;
  padding: 2px 17px 0;
  display: flex;
  align-items: center;
  border: 2px solid #506b7b;
  border-radius: 5px;
  font-size: 28px;
  letter-spacing: .5px;
}
.dots { letter-spacing: .35px; }
.hint {
  margin-top: 29px;
  padding-left: 1px;
  font-size: 28px;
  line-height: 40px;
  letter-spacing: .48px;
  color: #c1cacf;
}
.zip { margin-top: 22px; padding: 0 16px 2px; }

/* map */
.map {
  position: relative;
  width: 1949px;
  height: 640px;
  margin: 0 -1px;
  overflow: hidden;
}
.map-art { display: block; }
.map-art path { vector-effect: non-scaling-stroke; }
.farm { fill: #eeeed3; }
.mead { fill: #e3ebcd; }
.wood { fill: #d5e3c7; }
.soft { filter: blur(4px); }
.park { fill: #d7e7ba; }
.clay { fill: #ede2dc; }
.gray { fill: #dcd9cb; }
.ride { fill: none; stroke: #f4f5ec; stroke-width: 1.800; }
.water { fill: #cbdddd; stroke: #a5c6c9; stroke-width: 1; }
.stream { fill: none; stroke: #94bcc0; stroke-width: 2; }
.stream.thin { stroke-width: 1; }
.map-art .pc { fill: none; stroke: #d6d2c5; stroke-width: 13; vector-effect: none; }
.map-art .pf { fill: none; stroke: #fefdfb; stroke-width: 7.500; vector-effect: none; }
.contour { fill: none; stroke: #d2d3bb; stroke-width: 1.300; stroke-linejoin: round; }
.contour .deep { stroke: #b1b49e; stroke-width: 1.600; }
.rail { fill: none; stroke: #c8c4bd; stroke-width: 2.600; }
.rail .thinrail { stroke-width: 1.400; }
.siding { fill: none; stroke: #aa9c89; stroke-width: 1.900; }
.road { fill: none; stroke-linejoin: round; stroke-linecap: round; }
.minor-case { stroke: #d1cdbf; stroke-width: 5.200; }
.minor-fill { stroke: #fefdfb; stroke-width: 2.800; }
.sec-case { stroke: #fbf5ef; stroke-width: 5; }
.sec-fill { stroke: #dfb9b2; stroke-width: 2.400; }
.pri-case { stroke: #fbf5ef; stroke-width: 7; }
.pri-fill { stroke: #dcb5ae; stroke-width: 4; }
.motor-case { stroke: #f8ecea; stroke-width: 10; }
.motor-fill { stroke: #d49e9f; stroke-width: 7; }

.map-art text {
  font-family: "Noto Sans", "Open Sans", sans-serif;
  paint-order: stroke;
  stroke: rgba(250, 247, 238, .85);
  stroke-width: 3px;
  stroke-linejoin: round;
}
.place text { font-size: 18.500px; fill: #998a74; }
.reserve text { font-size: 15.500px; font-weight: 600; fill: #5f5d5a; }
.basin text { font-size: 15.500px; font-weight: 600; font-style: italic; fill: #2f7185; }
.street text { font-size: 18px; fill: #625a50; }
.height text { font-size: 16px; fill: #83806f; }
.map-art .city { font-size: 27px; font-weight: 600; fill: #403a33; stroke-width: 5px; }
.pin { fill: #ff8f52; stroke: #ffb48c; stroke-width: 2.500; stroke-linejoin: round; }
.pin-shadow { fill: rgba(50, 40, 30, .42); filter: blur(4px); }

.circle {
  position: absolute;
  left: 1038px;
  top: 128px;
  width: 655px;
  height: 384px;
  padding: 60px 60px 0 72px;
  border-radius: 5px;
  background: rgba(255, 255, 255, .96);
  box-shadow: 0 2px 12px rgba(0, 0, 0, .08);
}
.circle-lead { width: 480px; font-size: 38px; line-height: 54px; letter-spacing: .25px; }
.circle-name { margin-top: 55px; font-size: 38px; line-height: 50px; font-weight: 600; letter-spacing: .2px; white-space: nowrap; }
.circle-meta { margin-top: 16px; font-size: 28px; line-height: 40px; letter-spacing: .45px; }

/* footer */
.actions {
  padding: 84px 254px 0 256px;
  display: flex;
  justify-content: space-between;
}
.alt { font-size: 28px; line-height: 99px; letter-spacing: .45px; color: #acb9c1; }
.cta {
  width: 864px;
  height: 103px;
  padding: 4px 0 0;
  border: 0;
  border-radius: 4px;
  background: #ff8f5b;
  box-shadow: inset 0 -5px #e5824f, 0 4px 12px rgba(0, 0, 0, .12);
  color: #fff;
  font: 600 28px/32px "Work Sans", Inter, "Open Sans", sans-serif;
  letter-spacing: .4px;
  text-shadow: 0 2px 1px #c26540;
}
```
